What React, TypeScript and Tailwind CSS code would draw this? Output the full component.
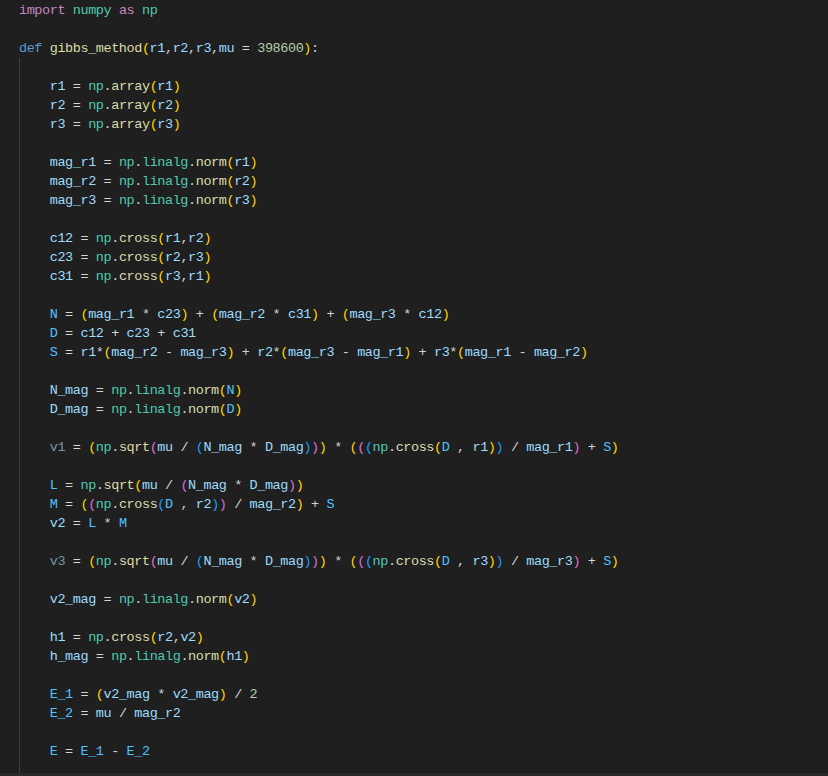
import React from 'react';

const source = [
  'import numpy as np',
  '',
  'def gibbs_method(r1,r2,r3,mu = 398600):',
  '',
  '    r1 = np.array(r1)',
  '    r2 = np.array(r2)',
  '    r3 = np.array(r3)',
  '',
  '    mag_r1 = np.linalg.norm(r1)',
  '    mag_r2 = np.linalg.norm(r2)',
  '    mag_r3 = np.linalg.norm(r3)',
  '',
  '    c12 = np.cross(r1,r2)',
  '    c23 = np.cross(r2,r3)',
  '    c31 = np.cross(r3,r1)',
  '',
  '    N = (mag_r1 * c23) + (mag_r2 * c31) + (mag_r3 * c12)',
  '    D = c12 + c23 + c31',
  '    S = r1*(mag_r2 - mag_r3) + r2*(mag_r3 - mag_r1) + r3*(mag_r1 - mag_r2)',
  '',
  '    N_mag = np.linalg.norm(N)',
  '    D_mag = np.linalg.norm(D)',
  '',
  '    v1 = (np.sqrt(mu / (N_mag * D_mag))) * (((np.cross(D , r1)) / mag_r1) + S)',
  '',
  '    L = np.sqrt(mu / (N_mag * D_mag))',
  '    M = ((np.cross(D , r2)) / mag_r2) + S',
  '    v2 = L * M',
  '',
  '    v3 = (np.sqrt(mu / (N_mag * D_mag))) * (((np.cross(D , r3)) / mag_r3) + S)',
  '',
  '    v2_mag = np.linalg.norm(v2)',
  '',
  '    h1 = np.cross(r2,v2)',
  '    h_mag = np.linalg.norm(h1)',
  '',
  '    E_1 = (v2_mag * v2_mag) / 2',
  '    E_2 = mu / mag_r2',
  '',
  '    E = E_1 - E_2',
  '',
];

const colors = {
  kw: 'text-[#C586C0]',
  def: 'text-[#569CD6]',
  mod: 'text-[#4EC9B0]',
  fn: 'text-[#DCDCAA]',
  v: 'text-[#9CDCFE]',
  c: 'text-[#4FC1FF]',
  dim: 'text-[#7896a6]',
  num: 'text-[#B5CEA8]',
  op: 'text-[#D4D4D4]',
};

const brackets = ['text-[#FFD700]', 'text-[#DA70D6]', 'text-[#179FFF]'];

function tokenize(line: string) {
  const parts = line.match(/[A-Za-z_][A-Za-z0-9_]*|\d+|[()]|\s+|./g) ?? [];
  const out: { text: string; cls: string }[] = [];
  let depth = 0;
  parts.forEach((p, i) => {
    let cls = colors.op;
    if (/^\s+$/.test(p)) cls = '';
    else if (p === '(') { cls = brackets[depth % 3]; depth++; }
    else if (p === ')') { depth--; cls = brackets[depth % 3]; }
    else if (/^\d+$/.test(p)) cls = colors.num;
    else if (/^[A-Za-z_]/.test(p)) {
      if (p === 'import' || p === 'as') cls = colors.kw;
      else if (p === 'def') cls = colors.def;
      else if (p === 'numpy' || p === 'np' || p === 'linalg') cls = colors.mod;
      else if (parts[i + 1] === '(') cls = colors.fn;
      else if (p === 'v1' || p === 'v3') cls = colors.dim;
      else if (/^[A-Z][A-Z0-9_]*$/.test(p)) cls = colors.c;
      else cls = colors.v;
    }
    out.push({ text: p, cls });
  });
  return out;
}

export default function App() {
  return (
    <div className="w-full h-[776px] bg-[#1f1f1f] flex flex-col overflow-hidden">
      <div
        className="h-[773px] overflow-hidden pl-[19px] pt-[0.5px] text-[13.5px] tracking-[-0.42px]"
        style={{ fontFamily: '"Liberation Mono", "DejaVu Sans Mono", monospace' }}
      >
        {source.map((line, idx) => (
          <div
            key={idx}
            className={
              idx >= 3
                ? 'h-[19px] leading-[19px] whitespace-pre shadow-[inset_1px_0_0_#404040]'
                : 'h-[19px] leading-[19px] whitespace-pre'
            }
          >
            {line === '' ? ' ' : tokenize(line).map((t, j) => (
              <span key={j} className={t.cls}>{t.text}</span>
            ))}
          </div>
        ))}
      </div>
      <div className="h-[3px] bg-[#2a2a2a]" />
    </div>
  );
}
